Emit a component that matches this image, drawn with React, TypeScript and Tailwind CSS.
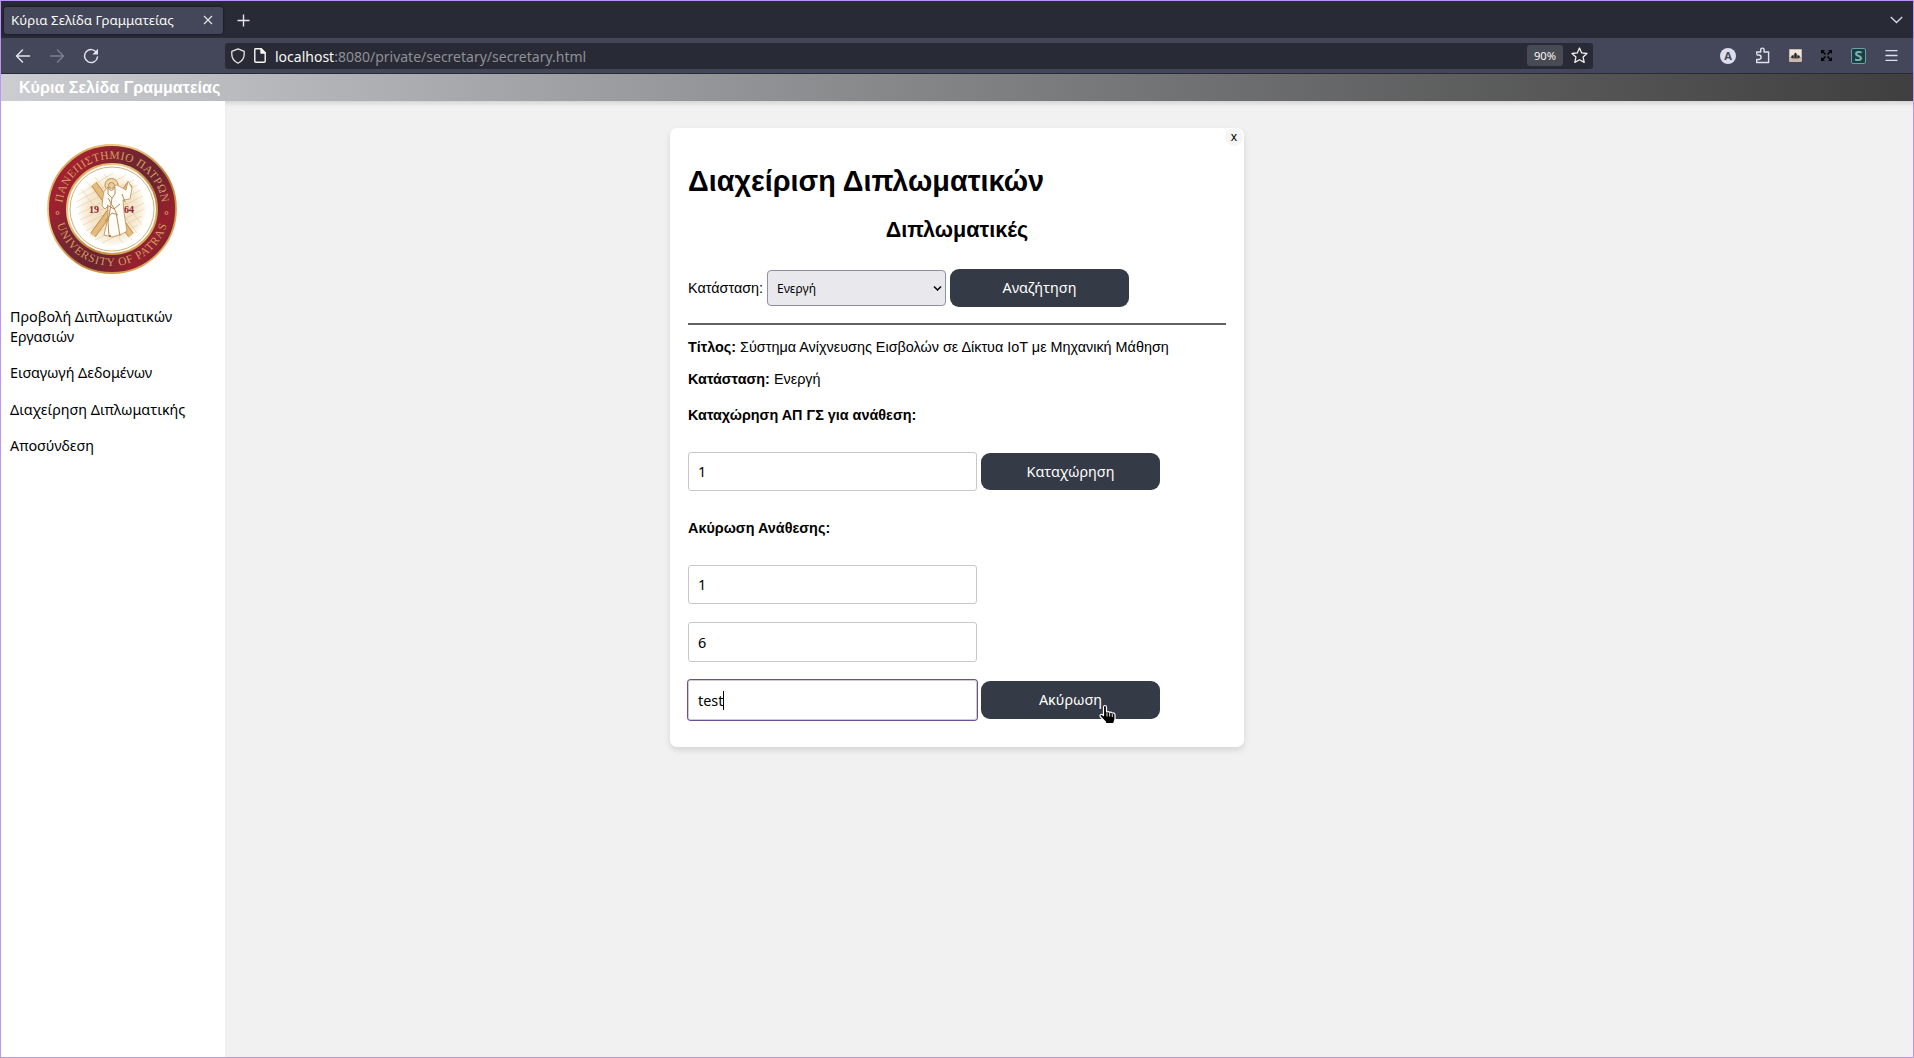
import React from "react";

const sans = "font-['Liberation_Sans',Arial,sans-serif]";
const noto = "font-['Noto_Sans',sans-serif]";

function TabBar() {
  return (
    <div className="flex h-[37px] items-center bg-[#282a36] pt-[1px]">
      <div className="ml-[3px] flex h-[27px] w-[219px] items-center justify-between rounded-[3px] bg-[#44475a] pl-[7px] pr-[10px] shadow-[0_0_3px_rgba(0,0,0,0.6)]">
        <span className="whitespace-nowrap text-[13.3px] leading-[20px] text-[#f8f8f2]">Κύρια Σελίδα Γραμματείας</span>
        <svg width="10" height="10" viewBox="0 0 10 10" stroke="#e8e8ee" strokeWidth="1.1" fill="none">
          <path d="M1 1l8 8M9 1l-8 8" />
        </svg>
      </div>
      <svg className="ml-[14px]" width="13" height="13" viewBox="0 0 13 13" stroke="#e4e5f0" strokeWidth="1.4" fill="none">
        <path d="M6.5 .5v12M.5 6.5h12" />
      </svg>
      <svg className="ml-auto mr-[10px]" width="13" height="8" viewBox="0 0 13 8" stroke="#d4d6e6" strokeWidth="1.4" fill="none">
        <path d="M.8 1l5.7 5.5L12.2 1" />
      </svg>
    </div>
  );
}

function NavigationBar() {
  return (
    <div className="flex h-[36px] items-center border-b border-[#282a36] bg-[#44475a]">
      <div className="flex w-[224px] items-center pl-[14px]">
        <svg width="16" height="16" viewBox="0 0 16 16" stroke="#e1e2ee" strokeWidth="1.5" fill="none" strokeLinecap="round" strokeLinejoin="round">
          <path d="M7.5 2L1.5 8l6 6M1.5 8h13" />
        </svg>
        <svg className="ml-[18px]" width="16" height="16" viewBox="0 0 16 16" stroke="#7b7e91" strokeWidth="1.5" fill="none" strokeLinecap="round" strokeLinejoin="round">
          <path d="M8.5 2l6 6-6 6M14.5 8h-13" />
        </svg>
        <svg className="ml-[18px]" width="16" height="16" viewBox="0 0 16 16" stroke="#e1e2ee" strokeWidth="1.5" fill="none" strokeLinecap="round">
          <path d="M13.8 5A6.5 6.5 0 1 0 14.5 9" />
          <path d="M15 .8v5.7h-5.7z" fill="#e1e2ee" stroke="none" />
        </svg>
      </div>
      <div className="flex h-[26px] w-[1368px] items-center rounded-[3px] bg-[#282a36] pl-[6px] pr-[5px]">
        <svg width="14" height="16" viewBox="0 0 14 16" stroke="#e7e7e5" strokeWidth="1.3" fill="none" strokeLinejoin="round">
          <path d="M7 .8L13.2 3.3v3.2c0 4-2.7 6.8-6.2 8.7C3.5 13.3.8 10.5.8 6.5V3.3z" />
        </svg>
        <svg className="ml-[9px]" width="12" height="15" viewBox="0 0 12 15" stroke="#f8f8f2" strokeWidth="1.4" fill="none" strokeLinejoin="round">
          <path d="M1.5.8h5.7l4 4v8.4q0 1-1 1H1.8q-1 0-1-1V1.5q0-.7.7-.7z" />
          <path d="M7 1v4h4z" fill="#f8f8f2" />
        </svg>
        <span className="ml-[9px] whitespace-nowrap pt-[2px] text-[14px] leading-[20px] text-[#8f9095]">
          <span className="text-[#f8f8f2]">localhost</span>:8080/private/secretary/secretary.html
        </span>
        <span className="ml-auto flex h-[21px] w-[36px] items-center justify-center rounded-[3px] bg-[#484a54] pt-px text-[11.2px] text-[#f8f8f2]">90%</span>
        <svg className="ml-[8px]" width="17" height="17" viewBox="0 0 17 17" stroke="#f0f0ee" strokeWidth="1.3" fill="none" strokeLinejoin="round">
          <path d="M8.5 1l2.2 4.9 5.3.6-3.9 3.6 1.1 5.3-4.7-2.7-4.7 2.7 1.1-5.3L1 6.5l5.3-.6z" />
        </svg>
      </div>
      <div className="ml-auto mr-[15px] flex items-center">
        <span className="flex size-[16px] items-center justify-center rounded-full bg-[#dcdeec] text-[11px] font-bold leading-none text-[#44475a]">A</span>
        <svg className="ml-[19px]" width="16" height="17" viewBox="0 0 16 17" stroke="#e1e2ee" strokeWidth="1.4" fill="none" strokeLinejoin="round">
          <path d="M1.7 7.5V5h4V2.8a1.7 1.7 0 0 1 3.4 0V5h4.5v10.5H1.7V12.5h2.2a1.7 1.7 0 0 0 0-4.5H1.7" />
        </svg>
        <svg className="ml-[18px]" width="13" height="13" viewBox="0 0 13 13">
          <rect width="13" height="13" rx="1" fill="#c9b9ad" />
          <path d="M1 1h11v7H1z" fill="#efe7de" />
          <path d="M1.5 8.5l1.5-2.5 1.5.5L5 5l1.5-1.5L8 5l.5 1.5L10 6l1.5 2.5L9 9.500H4z" fill="#5b4f4b" />
          <path d="M6.500 4v5M3.500 7v2M9.500 7v2" stroke="#222" />
        </svg>
        <svg className="ml-[19px]" width="11" height="11" viewBox="0 0 11 11" stroke="#050505" strokeWidth="1.6" fill="#050505">
          <path d="M1 1l3.500 3.500M10 1L6.500 4.500M1 10l3.500-3.500M10 10L6.500 6.500" />
          <path d="M0 0h4L0 4zM11 0H7l4 4zM0 11h4L0 7zM11 11H7l4-4z" stroke="none" />
        </svg>
        <span className="ml-[19px] flex h-[16px] w-[15px] items-center justify-center rounded-[2px] border border-[#6f9f9f] bg-[#173e42] text-[15px] font-bold leading-none text-[#80b0ae]">S</span>
        <svg className="ml-[19px]" width="13" height="11" viewBox="0 0 13 11" stroke="#dfe0ed" strokeWidth="1.3">
          <path d="M.5 .7h12M.5 5.500h12M.5 10.300h12" />
        </svg>
      </div>
    </div>
  );
}

function UniversitySeal() {
  return (
    <svg width="130" height="130" viewBox="0 0 130 130">
      <defs>
        <linearGradient id="ring" x1="0" y1=".15" x2="1" y2=".85">
          <stop offset="0" stopColor="#a9202f" />
          <stop offset=".2" stopColor="#9c212f" />
          <stop offset=".4" stopColor="#742631" />
          <stop offset=".62" stopColor="#6b2430" />
          <stop offset=".82" stopColor="#98202e" />
          <stop offset="1" stopColor="#70252f" />
        </linearGradient>
        <linearGradient id="gold" x1="0" y1="0" x2="1" y2="1">
          <stop offset="0" stopColor="#c98b38" />
          <stop offset=".3" stopColor="#f2d088" />
          <stop offset=".6" stopColor="#c18336" />
          <stop offset="1" stopColor="#edc373" />
        </linearGradient>
        <radialGradient id="glow">
          <stop offset="0" stopColor="#f0dcb8" />
          <stop offset=".7" stopColor="#f5e8d0" />
          <stop offset="1" stopColor="#fffdf8" />
        </radialGradient>
        <path id="upper" d="M15 65a50 50 0 0 1 100 0" />
        <path id="lower" d="M8 65a57 57 0 0 0 114 0" />
      </defs>
      <circle cx="65" cy="65" r="64" fill="url(#ring)" stroke="url(#gold)" strokeWidth="1.8" />
      <circle cx="65" cy="65" r="45" fill="#fff" stroke="url(#gold)" strokeWidth="2" />
      <circle cx="65" cy="65" r="42" fill="none" stroke="#c99b57" strokeWidth=".8" />
      <path d="M36 43l13-11 19-3 17 7 10 12 5 18-7 19-15 14-18 4-15-9-10-13-4-19z" fill="url(#glow)" />
      <g stroke="#d9b678" strokeWidth=".6" opacity=".6">
        <path d="M31 51l35-22M29 58l50-27M29 64l58-28M31 70l60-29M33 76l61-30M36 81l60-29M39 87l58-28M43 92l54-27M48 96l47-24M55 99l36-18M34 45l42 54M40 38l45 58M48 33l42 56M57 30l38 51" />
      </g>
      <g stroke="#bd8746" strokeWidth="6.5">
        <path d="M47 40l37 51M83 40L46 91" />
      </g>
      <g stroke="#e4bc7c" strokeWidth="5">
        <path d="M47 40l37 51M83 40L46 91" />
      </g>
      <circle cx="64.5" cy="41" r="6.5" fill="#efd6a8" stroke="#c19151" />
      <path d="M60 44q-4 3-4 9l-1 9 3 3 3-3 0 12-4 17 8 2 10-3 5-3-3-18-1-13 7-1 2-11-4-7-2 9-9-5z" fill="#fffdf8" stroke="#bd9158" strokeWidth=".8" />
      <path d="M61 43q3 7 7 0v7l-3 4-4-4zM61 54l8 14 4 24M65 54l-4 24 1 14M60 61l7 4 6-5M58 77l7-8 6 2M75 50l3 8" fill="none" stroke="#b88b54" />
      <circle cx="64.5" cy="41.5" r="3" fill="#eccaa0" stroke="#a27646" strokeWidth=".7" />
      <circle cx="63" cy="92" r="1" fill="#9b6b37" />
      <text className="font-['Liberation_Serif',serif] text-[11.5px]" letterSpacing=".4" fill="#d39c5e" textAnchor="middle">
        <textPath href="#upper" startOffset="50%">ΠΑΝΕΠΙΣΤΗΜΙΟ ΠΑΤΡΩΝ</textPath>
      </text>
      <text className="font-['Liberation_Serif',serif] text-[11.5px]" letterSpacing=".85" fill="#d39c5e" textAnchor="middle">
        <textPath href="#lower" startOffset="50%">UNIVERSITY OF PATRAS</textPath>
      </text>
      <g fill="none" stroke="#dfad68" strokeWidth=".8">
        <circle cx="10.5" cy="69" r="1.5" />
        <circle cx="119.5" cy="69" r="1.5" />
      </g>
      <g className="font-['Liberation_Serif',serif] text-[10px] font-bold" fill="#922432">
        <text x="42" y="69">19</text>
        <text x="77" y="69">64</text>
      </g>
    </svg>
  );
}

function Sidebar() {
  return (
    <aside className={`w-[224px] shrink-0 bg-white text-[14.35px] leading-[20px] text-black ${noto}`}>
      <div className="flex pl-[46px] pt-[43px]">
        <UniversitySeal />
      </div>
      <nav className="mt-[33px] flex flex-col gap-[16.3px] pl-[9px]">
        <a className="w-[180px]">Προβολή Διπλωματικών Εργασιών</a>
        <a>Εισαγωγή Δεδομένων</a>
        <a>Διαχείρηση Διπλωματικής</a>
        <a>Αποσύνδεση</a>
      </nav>
    </aside>
  );
}

function ActionButton({ children, className }: { children: React.ReactNode; className: string }) {
  return (
    <button className={`ml-[4px] w-[179px] rounded-[9px] bg-[#343a46] text-[14.4px] text-white ${noto} ${className}`}>
      {children}
    </button>
  );
}

function TextField({ value, className }: { value: string; className: string }) {
  return (
    <input
      readOnly
      defaultValue={value}
      className={`block w-[289px] rounded-[3px] border border-[#c8c8c8] bg-white pl-[9px] pr-[10px] text-[14.4px] text-black outline-none ${noto} ${className}`}
    />
  );
}

function HandCursor() {
  return (
    <svg className="absolute left-[121px] top-[23px]" width="22" height="22" viewBox="0 0 22 22">
      <path
        d="M7 1.500q1.500 0 1.500 1.500v5q2-1 3 .3 1.700-.6 2.700.7 2.800-.5 2.800 2v4q0 1.500-1 3v1.500H7.500V18l-5-5q-1.300-1.800.5-2.500 1.300-.2 2.500 1V3q0-1.500 1.500-1.500z"
        fill="#000"
        stroke="#fff"
        strokeWidth="1.2"
        strokeLinejoin="round"
      />
      <path d="M9 9v3.500M11.700 9v3.500M14.300 10v3" stroke="#fff" strokeWidth=".9" />
    </svg>
  );
}

function ThesisCard() {
  return (
    <section className={`relative ml-[445px] mt-[27px] h-[619px] w-[574px] rounded-[7px] bg-white px-[18px] pt-[35px] text-[14.4px] leading-[20px] text-black shadow-[0_3px_6px_rgba(0,0,0,0.12)] ${sans}`}>
      <button className={`absolute right-[1px] top-0 flex size-[18px] items-center justify-center rounded-full bg-[#f5f5f5] pb-px text-[12px] leading-none ${noto}`}>x</button>
      <h1 className="text-[28.8px] font-bold leading-[36px]">Διαχείριση Διπλωματικών</h1>
      <h2 className="mt-[17px] text-center text-[21.6px] font-bold leading-[28px]">Διπλωματικές</h2>
      <div className="mt-[25px] flex h-[38px] items-center">
        <label className="w-[79px] whitespace-nowrap">Κατάσταση:</label>
        <div className="relative">
          <select className={`block h-[36px] w-[179px] appearance-none rounded-[4px] border border-[#8f8f9d] bg-[#e9e9ed] pl-[9px] pt-px text-[12px] ${noto}`}>
            <option>Ενεργή</option>
          </select>
          <svg className="absolute right-[4px] top-[15px]" width="9" height="7" viewBox="0 0 9 7" fill="none" stroke="#000" strokeWidth="1.5">
            <path d="M1 1.5l3.5 3.5L8 1.5" />
          </svg>
        </div>
        <ActionButton className="h-[38px]">Αναζήτηση</ActionButton>
      </div>
      <hr className="mt-[16px] h-[2px] border-0 bg-[#626262]" />
      <p className="mt-[12px] whitespace-nowrap"><b>Τίτλος:</b> Σύστημα Ανίχνευσης Εισβολών σε Δίκτυα IoT με Μηχανική Μάθηση</p>
      <p className="mt-[12px]"><b>Κατάσταση:</b> Ενεργή</p>
      <h3 className="mt-[16px] font-bold">Καταχώρηση ΑΠ ΓΣ για ανάθεση:</h3>
      <div className="mt-[27px] flex items-center">
        <TextField value="1" className="h-[39px]" />
        <ActionButton className="h-[37px]">Καταχώρηση</ActionButton>
      </div>
      <h3 className="mt-[27px] font-bold">Ακύρωση Ανάθεσης:</h3>
      <TextField value="1" className="mt-[27px] h-[39px]" />
      <TextField value="6" className="mt-[18px] h-[40px]" />
      <div className="mt-[18px] flex items-center">
        <div className={`flex h-[40px] w-[289px] items-center rounded-[3px] border border-[#ccc] pl-[9px] pt-px ring-1 ring-[#6b5093] ${noto}`}>
          test<span className="h-[19px] w-px bg-black" />
        </div>
        <div className="relative">
          <ActionButton className="h-[38px]">Ακύρωση</ActionButton>
          <HandCursor />
        </div>
      </div>
    </section>
  );
}

export default function App() {
  return (
    <div className={`flex h-[1058px] w-[1914px] flex-col overflow-hidden border border-[#bd93f9] bg-[#f1f1f1] ${noto}`}>
      <TabBar />
      <NavigationBar />
      <header className={`relative z-10 h-[27px] shrink-0 bg-linear-to-r from-[#cbcdd1] to-[#3f3f3f] pl-[18px] text-[16.1px] font-bold leading-[26px] text-white ${sans}`}>
        Κύρια Σελίδα Γραμματείας
      </header>
      <div className="flex min-h-0 flex-1">
        <Sidebar />
        <main className="flex-1 shadow-[inset_0_5px_5px_-3px_rgba(0,0,0,0.14)]">
          <ThesisCard />
        </main>
      </div>
    </div>
  );
}
